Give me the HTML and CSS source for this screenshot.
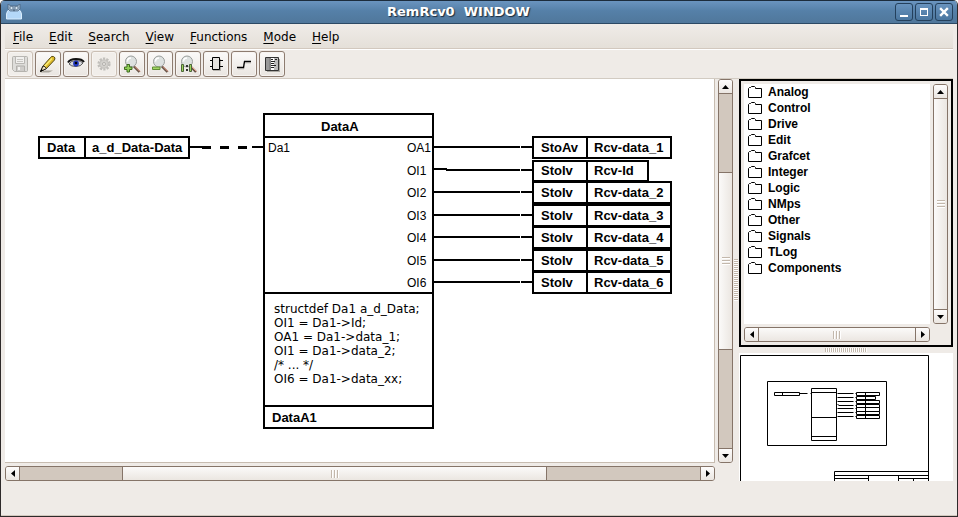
FILE: index.html
```html
<!DOCTYPE html>
<html lang="en">
<head>
<meta charset="utf-8">
<title>RemRcv0 WINDOW</title>
<link rel="stylesheet" href="styles.css">
</head>
<body>
<div class="window">
  <header class="titlebar">
    <svg class="app-icon" width="16" height="16" viewBox="0 0 16 16" aria-hidden="true">
      <path d="M.5 15V10Q1 6 4 5.500H12Q15 6 15.500 10V15Z" fill="#b4d8f8" stroke="#d8ecfc"/>
      <path d="M2 0L5 2H11L14 0V5L12 7H4L2 5Z" fill="#9ab4cc" stroke="#486078" stroke-width=".7"/>
      <circle cx="5.500" cy="4" r="1.600" fill="#d8e8f4" stroke="#405870" stroke-width=".6"/><circle cx="10.500" cy="4" r="1.600" fill="#d8e8f4" stroke="#405870" stroke-width=".6"/>
      <path d="M7 5.500L8 7.500L9 5.500Z" fill="#304860"/>
    </svg>
    <h1 class="title">RemRcv0&nbsp; WINDOW</h1>
    <div class="window-buttons">
      <button type="button" class="window-button" aria-label="Minimize"><svg width="16" height="16" viewBox="0 0 16 16"><path d="M4 11h8v2H4z" fill="#fff"/></svg></button>
      <button type="button" class="window-button" aria-label="Maximize"><svg width="16" height="16" viewBox="0 0 16 16"><path d="M4 4h8v8H4zM5 6v5h6V6z" fill="#fff" fill-rule="evenodd"/></svg></button>
      <button type="button" class="window-button" aria-label="Close"><svg width="16" height="16" viewBox="0 0 16 16"><path d="M5 5l6 6M11 5l-6 6" stroke="#fff" stroke-width="2.400" stroke-linecap="square"/></svg></button>
    </div>
  </header>

  <nav class="menubar">
    <button type="button" class="menu"><u>F</u>ile</button>
    <button type="button" class="menu"><u>E</u>dit</button>
    <button type="button" class="menu"><u>S</u>earch</button>
    <button type="button" class="menu"><u>V</u>iew</button>
    <button type="button" class="menu"><u>F</u>unctions</button>
    <button type="button" class="menu"><u>M</u>ode</button>
    <button type="button" class="menu"><u>H</u>elp</button>
  </nav>

  <div class="toolbar">
    <button type="button" class="tool" disabled aria-label="Save"><svg width="18" height="18" viewBox="0 0 18 18"><path d="M1.500 2.500q0-1 1-1h13q1 0 1 1v13q0 1-1 1h-12l-2-2z" fill="#deddda" stroke="#b5b3ae"/><path d="M4.500 1.500h9v7h-9z" fill="#f1f0ee" stroke="#b9b7b3"/><path d="M6 4.500h6M6 6.500h6" stroke="#c8c6c2"/><path d="M5.500 16v-5h8v5" fill="#cfcdca" stroke="#b3b1ad"/><path d="M7 12h2v3H7z" fill="#f4f3f1"/></svg></button>
    <button type="button" class="tool" aria-label="Edit"><svg width="18" height="18" viewBox="0 0 18 18"><path d="M1 17.500h9l4-2H5z" fill="#aaa69d"/><path d="M1.500 16.500L4 11L11.500 2.500Q12.500 .8 14.500 1.500Q17 2.500 15.500 5L7.500 13.500Z" fill="#dcb82a" stroke="#554b18"/><path d="M5.500 11.500L13 3.500" stroke="#faec74" stroke-width="1.500"/><path d="M1.500 16.500L4 11Q6 11 7.500 13.500Z" fill="#eee0bb" stroke="#222"/><path d="M1 17l1.500-3 1.800 1.500z" fill="#000"/></svg></button>
    <button type="button" class="tool" aria-label="View"><svg width="18" height="18" viewBox="0 0 18 18"><path d="M1 7.500Q3 4 9 4Q15 4 17 7" fill="none" stroke="#111" stroke-width="2"/><path d="M2 9Q4 5.500 9 5.500Q14 5.500 16 8Q14 11.500 9 11.500Q4 11.500 2 9Z" fill="#d5d6dc" stroke="#333" stroke-width=".8"/><circle cx="9" cy="8.500" r="2.900" fill="#233ac2"/><circle cx="9" cy="8" r="1.300" fill="#000"/></svg></button>
    <button type="button" class="tool" disabled aria-label="Build"><svg width="18" height="18" viewBox="0 0 18 18"><circle cx="9" cy="9" r="5.400" fill="none" stroke="#c1bfbb" stroke-width="2.400" stroke-dasharray="2.200 1.193"/><circle cx="9" cy="9" r="4.200" fill="#d3d1cd" stroke="#c0beba"/><circle cx="9" cy="9" r="1.500" fill="#efede9" stroke="#b2b0ac"/></svg></button>
    <button type="button" class="tool" aria-label="Zoom in"><svg width="18" height="18" viewBox="0 0 18 18"><path d="M10.500 11l6 6" stroke="#685548" stroke-width="2.400"/><path d="M12 11.500l5 5" stroke="#eba18c"/><circle cx="8" cy="6.500" r="5.500" fill="#dde1e0" stroke="#9a9e9c"/><path d="M4.500 6.500q0-3.500 3.500-3.500" fill="none" stroke="#fff" stroke-width="1.500"/><path d="M4 9.500h2.500v2.500h2.500v2.500H6.500v2.500H4v-2.500H1.500V12H4z" fill="#8fcf55" stroke="#3f6a20"/></svg></button>
    <button type="button" class="tool" aria-label="Zoom out"><svg width="18" height="18" viewBox="0 0 18 18"><path d="M10.500 11l6 6" stroke="#685548" stroke-width="2.400"/><path d="M12 11.500l5 5" stroke="#eba18c"/><circle cx="8" cy="6.500" r="5.500" fill="#dde1e0" stroke="#9a9e9c"/><path d="M4.500 6.500q0-3.500 3.500-3.500" fill="none" stroke="#fff" stroke-width="1.500"/><path d="M1.500 12h7.500v2.500H1.500z" fill="#a2d666" stroke="#5e8d34"/></svg></button>
    <button type="button" class="tool" aria-label="Zoom reset"><svg width="18" height="18" viewBox="0 0 18 18"><path d="M11 11l6 6" stroke="#685548" stroke-width="2.400"/><path d="M12.500 11.500l5 5" stroke="#eba18c"/><circle cx="8" cy="6.500" r="5.500" fill="#dde1e0" stroke="#9a9e9c"/><path d="M4.500 6.500q0-3.500 3.500-3.500" fill="none" stroke="#fff" stroke-width="1.500"/><path d="M2.500 9.500h2v7h-2zM10.500 9.500h2v7h-2z" fill="#9bd45b" stroke="#4c653a"/><path d="M7 10h2v2H7zM7 14h2v2H7z" fill="#333"/></svg></button>
    <button type="button" class="tool" aria-label="Object"><svg width="18" height="18" viewBox="0 0 18 18"><path d="M6 4h8v12H6z" fill="#b5b2ac"/><path d="M5.500 2.500h7v12h-7z" fill="#e4e2de" stroke="#000"/><path d="M3 5.500h2M3 11.500h2M13 5.500h3M13 11.500h3" stroke="#000"/></svg></button>
    <button type="button" class="tool" aria-label="Connection"><svg width="18" height="18" viewBox="0 0 18 18"><path d="M3 14h6v-6h7" fill="none" stroke="#cbc8c2"/><path d="M2 12.500h6.500l1-6H16" fill="none" stroke="#000" stroke-width="1.300"/></svg></button>
    <button type="button" class="tool" aria-label="Palette"><svg width="18" height="18" viewBox="0 0 18 18"><path d="M4 4h13v13H4z" fill="#aaa8a2"/><path d="M2.500 2.500h13v13h-13z" fill="#fff" stroke="#333"/><path d="M3 3h3v12H3z" fill="#999"/><path d="M11 3h4v12h-4z" fill="#bbb"/><path d="M7 3v12" stroke="#111"/><path d="M8 4.500h2M8 6.500h4M8 8.500h3M8 10.500h5M8 12.500h3M12 4.500h2" stroke="#222"/></svg></button>
  </div>

  <main class="workspace">
    <section class="editor" aria-label="Program">
      <div class="canvas">
        <svg class="diagram" width="709" height="382" viewBox="5 79 709 382" role="img" aria-label="Function block diagram">
          <g class="wire">
            <path d="M190 147h12M252 147h12"/>
            <path class="wire-data" d="M202 147.500h9M220 147.500h9M238 147.500h9"/>
            <path d="M434 147h86M521 147h12M434 169h13M446 170h74M521 170h12M434 192h86M521 192h12M434 215h86M521 215h12M434 237h86M521 237h12M434 260h86M521 260h12M434 282h86M521 282h12"/>
          </g>
          <g class="shape">
            <path d="M39 137h150v21h-150zM85 137v21"/>
            <path d="M264 114h169v314h-169zM264 137h169M264 293h169M264 406h169"/>
            <path d="M533 137h138v21h-138zM587 137v21"/>
            <path d="M533 161h115v20h-115zM587 161v20"/>
            <path d="M533 182h138v21h-138zM587 182v21"/>
            <path d="M533 205h138v21h-138zM587 205v21"/>
            <path d="M533 227h138v21h-138zM587 227v21"/>
            <path d="M533 250h138v21h-138zM587 250v21"/>
            <path d="M533 272h138v21h-138zM587 272v21"/>
          </g>
          <g class="name">
            <text x="47" y="152">Data</text><text x="92" y="152">a_d_Data-Data</text>
            <text x="321" y="131">DataA</text><text x="272" y="422">DataA1</text>
            <text x="541" y="152">StoAv</text><text x="594" y="152">Rcv-data_1</text>
            <text x="541" y="175">StoIv</text><text x="594" y="175">Rcv-Id</text>
            <text x="541" y="197">StoIv</text><text x="594" y="197">Rcv-data_2</text>
            <text x="541" y="220">StoIv</text><text x="594" y="220">Rcv-data_3</text>
            <text x="541" y="242">StoIv</text><text x="594" y="242">Rcv-data_4</text>
            <text x="541" y="265">StoIv</text><text x="594" y="265">Rcv-data_5</text>
            <text x="541" y="287">StoIv</text><text x="594" y="287">Rcv-data_6</text>
          </g>
          <g class="port">
            <text x="268" y="152">Da1</text>
            <text x="407" y="152">OA1</text><text x="407" y="175">OI1</text><text x="407" y="197">OI2</text>
            <text x="407" y="220">OI3</text><text x="407" y="242">OI4</text><text x="407" y="265">OI5</text><text x="407" y="287">OI6</text>
          </g>
          <g class="code">
            <text x="274" y="313">structdef Da1 a_d_Data;</text>
            <text x="274" y="327">OI1 = Da1-&gt;Id;</text>
            <text x="274" y="341">OA1 = Da1-&gt;data_1;</text>
            <text x="274" y="355">OI1 = Da1-&gt;data_2;</text>
            <text x="274" y="369">/* ... */</text>
            <text x="274" y="383">OI6 = Da1-&gt;data_xx;</text>
          </g>
        </svg>
      </div>
      <div class="scrollbar vertical editor-y">
        <button type="button" class="arrow" aria-label="Scroll up"><svg width="7" height="4" viewBox="0 0 7 4"><path d="M3.500 0L7 4H0z"/></svg></button>
        <div class="track"><i class="before"></i><i class="thumb"></i><i class="after"></i></div>
        <button type="button" class="arrow" aria-label="Scroll down"><svg width="7" height="4" viewBox="0 0 7 4"><path d="M0 0H7L3.500 4z"/></svg></button>
      </div>
      <div class="scrollbar horizontal editor-x">
        <button type="button" class="arrow" aria-label="Scroll left"><svg width="4" height="7" viewBox="0 0 4 7"><path d="M4 0V7L0 3.500z"/></svg></button>
        <div class="track"><i class="before"></i><i class="thumb"></i><i class="after"></i></div>
        <button type="button" class="arrow" aria-label="Scroll right"><svg width="4" height="7" viewBox="0 0 4 7"><path d="M0 0V7L4 3.500z"/></svg></button>
      </div>
    </section>

    <div class="splitter vertical"><i class="grip"></i></div>

    <aside class="side">
      <section class="palette" aria-label="Palette">
        <svg class="defs" width="0" height="0" aria-hidden="true"><symbol id="folder" viewBox="0 0 14 12"><path d="M.5 11.500V2.500L1.500 1.500H2.500L3.500 .5H6.500L7.500 1.500V2.500H13.500V11.500Z" fill="#fff" stroke="#000"/></symbol></svg>
        <ul class="tree">
          <li><svg width="14" height="12"><use href="#folder"/></svg>Analog</li>
          <li><svg width="14" height="12"><use href="#folder"/></svg>Control</li>
          <li><svg width="14" height="12"><use href="#folder"/></svg>Drive</li>
          <li><svg width="14" height="12"><use href="#folder"/></svg>Edit</li>
          <li><svg width="14" height="12"><use href="#folder"/></svg>Grafcet</li>
          <li><svg width="14" height="12"><use href="#folder"/></svg>Integer</li>
          <li><svg width="14" height="12"><use href="#folder"/></svg>Logic</li>
          <li><svg width="14" height="12"><use href="#folder"/></svg>NMps</li>
          <li><svg width="14" height="12"><use href="#folder"/></svg>Other</li>
          <li><svg width="14" height="12"><use href="#folder"/></svg>Signals</li>
          <li><svg width="14" height="12"><use href="#folder"/></svg>TLog</li>
          <li><svg width="14" height="12"><use href="#folder"/></svg>Components</li>
        </ul>
        <div class="scrollbar vertical">
          <button type="button" class="arrow" aria-label="Scroll up"><svg width="7" height="4" viewBox="0 0 7 4"><path d="M3.500 0L7 4H0z"/></svg></button>
          <div class="track"><i class="thumb"></i></div>
          <button type="button" class="arrow" aria-label="Scroll down"><svg width="7" height="4" viewBox="0 0 7 4"><path d="M0 0H7L3.500 4z"/></svg></button>
        </div>
        <div class="scrollbar horizontal">
          <button type="button" class="arrow" aria-label="Scroll left"><svg width="4" height="7" viewBox="0 0 4 7"><path d="M4 0V7L0 3.500z"/></svg></button>
          <div class="track"><i class="thumb"></i></div>
          <button type="button" class="arrow" aria-label="Scroll right"><svg width="4" height="7" viewBox="0 0 4 7"><path d="M0 0V7L4 3.500z"/></svg></button>
        </div>
      </section>
      <div class="splitter horizontal"><i class="grip"></i></div>
      <section class="overview" aria-label="Overview">
        <svg class="diagram thin" width="214" height="128" viewBox="739 353 214 128">
          <g transform="translate(.5 .5)">
            <path d="M740 482V355H928V482M767 381h119v64h-119z"/>
            <path d="M774 392h25v3h-25zM782 392v3M799 393h8M810 393h1"/>
            <path d="M811 388h25v52h-25zM811 392h25M811 417h25M811 436h25"/>
            <path d="M837 393h16M837 397h16M837 401h16M837 404h1M838 405h15M837 408h16M837 412h16M837 416h16M855 393h1M855 397h1M855 401h1M855 405h1M855 408h1M855 412h1M855 416h1"/>
            <path d="M856 392h23v3h-23zM856 396h19v3h-19zM856 400h23v3h-23zM856 404h23v3h-23zM856 407h23v4h-23zM856 411h23v3h-23zM856 415h23v3h-23zM865 392v26"/>
            <path d="M834 482V471H928M834 475H928M834 478H868M898 478H928M868 475V482M898 475V482M913 478V482"/>
          </g>
        </svg>
      </section>
    </aside>
  </main>
  <footer class="statusbar"></footer>
</div>
</body>
</html>
```
FILE: styles.css
```css
* { box-sizing: border-box; }

body {
  margin: 0;
  font-family: "DejaVu Sans", sans-serif;
  font-size: 12px;
  color: #000;
}

button {
  margin: 0;
  padding: 0;
  font: inherit;
  color: inherit;
}

.window {
  display: flex;
  flex-direction: column;
  height: 100vh;
  overflow: hidden;
  background: #efebe7;
  border: 1px solid #2e2a2a;
  border-top: 0;
  border-radius: 5px 5px 0 0;
}

/* Title bar */
.titlebar {
  display: flex;
  align-items: center;
  flex: none;
  height: 24px;
  padding: 0 4px 0 5px;
  background: linear-gradient(#6a94bf, #5580a8 45%, #50779b);
  border-top: 1px solid #1c2c3c;
  border-bottom: 1px solid #2c4964;
}

.title {
  flex: 1;
  margin: 0;
  text-align: center;
  font-size: 13px;
  line-height: 20px;
  color: #fff;
  text-shadow: 1px 1px 1px #1c2c3c;
}

.window-buttons {
  display: flex;
  gap: 2px;
}

.window-button {
  width: 18px;
  height: 18px;
  background: linear-gradient(#6893be, #4a769f);
  border: 1px solid #24405c;
  border-radius: 3px;
}

.window-button svg { display: block; }

/* Menus */
.menubar {
  display: flex;
  flex: none;
  height: 26px;
  margin: 0 4px;
  background: linear-gradient(#f0ece8, #e4dfd8);
  border-bottom: 1px solid #fff;
  box-shadow: inset 0 -1px #d2c8be;
}

.menu {
  padding: 0 8px;
  background: none;
  border: 0;
}

.menu u { text-underline-offset: 2px; }

.toolbar {
  display: flex;
  gap: 2px;
  flex: none;
  height: 29px;
  margin: 0 4px;
  padding: 1px 2px;
  border-bottom: 1px solid #d2cbc2;
}

.tool {
  display: grid;
  place-items: center;
  width: 26px;
  height: 26px;
  background: linear-gradient(#fbfaf9, #e9e5e0);
  border: 1px solid #8d7c70;
  border-radius: 3px;
  box-shadow: inset 0 0 0 1px #f7f4f1;
}

.tool:disabled {
  background: #f1eeea;
  border-color: #cabfb4;
}

/* Work area */
.workspace {
  display: flex;
  flex: 1;
  min-height: 0;
  margin: 0 4px;
}

.editor {
  display: grid;
  grid-template: minmax(0, 1fr) 15px / minmax(0, 1fr) 15px;
  gap: 3px;
  flex: 1;
  min-width: 0;
}

.canvas {
  overflow: hidden;
  background: #fff;
  border: solid #c7bcb0;
  border-width: 0 1px 1px 0;
}

.diagram {
  display: block;
  fill: none;
  stroke: #000;
  stroke-width: 2px;
}

.diagram.thin { stroke-width: 1px; }
.diagram text { fill: #000; stroke: none; }
.wire-data { stroke-width: 3px; }

.name {
  font: bold 13px "Liberation Sans", Arial, sans-serif;
}

.port {
  font: 12px "Liberation Sans", Arial, sans-serif;
}

/* Scroll bars */
.scrollbar {
  display: flex;
  min-width: 0;
  min-height: 0;
  border: 1px solid #857468;
  border-radius: 3px;
  overflow: hidden;
}

.track {
  display: flex;
  flex: 1;
  background: #d2c8be;
}

.scrollbar.vertical,
.scrollbar.vertical .track { flex-direction: column; }

.arrow {
  display: grid;
  place-items: center;
  flex: none;
  width: 13px;
  height: 13px;
  border: 0;
  background: linear-gradient(#fdfcfc, #ebe6e1);
}

.thumb {
  display: grid;
  place-items: center;
  flex: 1;
  background: linear-gradient(#fbfaf9, #ebe6e1);
}

.vertical .thumb {
  background: linear-gradient(90deg, #fbfaf9, #ebe6e1);
  border: solid #857468;
  border-width: 1px 0;
}

.horizontal .thumb {
  border: solid #857468;
  border-width: 0 1px;
}

.thumb::after {
  content: "";
  width: 8px;
  height: 8px;
}

.vertical .thumb::after { background: repeating-linear-gradient(#c3b8ac 0 1px, #fff 1px 2px, transparent 2px 3px); }
.horizontal .thumb::after { background: repeating-linear-gradient(90deg, #c3b8ac 0 1px, #fff 1px 2px, transparent 2px 3px); }

.before,
.after { border: 0 solid #857468; }

.vertical .before { border-top-width: 1px; }
.vertical .after { border-bottom-width: 1px; }
.horizontal .before { border-left-width: 1px; }
.horizontal .after { border-right-width: 1px; }

.editor-y .before { flex: 79; }
.editor-y .thumb { flex: 178; }
.editor-y .after { flex: 99; }

.editor-x .before { flex: 103; }
.editor-x .thumb { flex: 425; }
.editor-x .after { flex: 154; }

/* Splitters */
.splitter {
  display: grid;
  place-items: center;
  flex: none;
}

.splitter.vertical { width: 6px; }
.splitter.horizontal { height: 6px; }

.vertical > .grip {
  width: 4px;
  height: 42px;
  background: repeating-linear-gradient(#c3b8ac 0 1px, #fff 1px 2px);
}

.horizontal > .grip {
  width: 42px;
  height: 4px;
  background: repeating-linear-gradient(90deg, #c3b8ac 0 1px, #fff 1px 2px);
}

/* Side column */
.side {
  display: flex;
  flex-direction: column;
  flex: none;
  width: 214px;
}

.palette {
  display: grid;
  grid-template: minmax(0, 1fr) 15px / minmax(0, 1fr) 15px;
  gap: 3px;
  flex: 1;
  min-height: 0;
  padding: 3px;
  border: 2px solid #000;
}

.defs { position: absolute; }

.tree {
  margin: 0;
  padding: 0 4px;
  overflow: hidden;
  list-style: none;
  background: #fff;
  font: bold 12px/16px "Liberation Sans", Arial, sans-serif;
}

.tree li {
  display: flex;
  align-items: center;
  gap: 6px;
}

.overview {
  flex: none;
  height: 128px;
  overflow: hidden;
  background: #fff;
}

.statusbar {
  flex: none;
  height: 35px;
  border-bottom: 1px solid #d2c8be;
}
```
